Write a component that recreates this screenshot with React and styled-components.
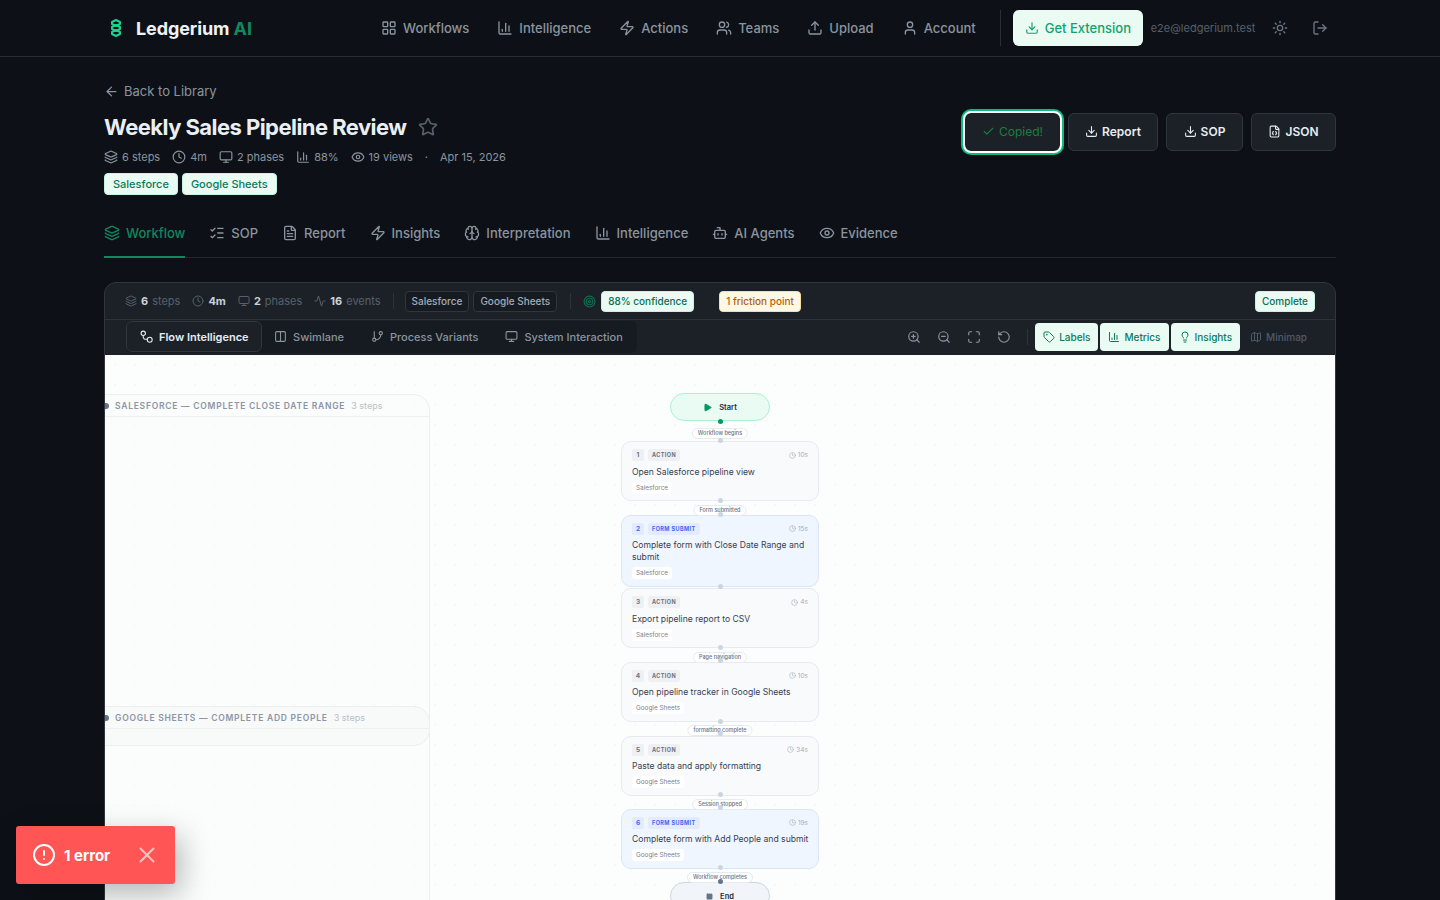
import { createGlobalStyle, styled } from 'styled-components';
import {
  Activity, ArrowLeft, Bot, Brain, ChartColumn, Check, CircleAlert, Clock, Columns2, Download, Eye,
  FileJson, FileText, GitBranch, Layers, LayoutGrid, Lightbulb, ListChecks, LogOut, Map as MapIcon,
  Maximize, Monitor, Play, RotateCcw, Square, Star, Sun, Tag, Target, Upload, User, Users, X, Zap,
  ZoomIn, ZoomOut,
} from 'lucide-react';

const GlobalStyle = createGlobalStyle`
  html, body { margin: 0; height: 100%; overflow: hidden; background: #0d1117; }
  body { font-family: Inter, "Liberation Sans", sans-serif; color: #e6edf3; }
  * { box-sizing: border-box; }
`;

const Page = styled.div`
  height: 900px;
  overflow: hidden;
  position: relative;
`;

const Nav = styled.header`
  height: 57px;
  border-bottom: 1px solid #2a2d32;
  padding: 0 104px;
  display: flex;
  align-items: center;
`;

const Brand = styled.div`
  display: flex;
  align-items: center;
  gap: 13px;
  font-size: 18px;
  font-weight: 700;
  letter-spacing: -0.1px;
  color: #f0f3f6;
  width: 277px;
  padding-left: 5px;
  span { color: #0f8a5f; }
`;

const NavLink = styled.a`
  display: flex;
  align-items: center;
  gap: 6px;
  font-size: 13px;
  font-weight: 500;
  color: #8b949e;
  margin-right: 28px;
  white-space: nowrap;
`;

const NavDivider = styled.div`
  width: 1px;
  height: 36px;
  background: #2a2d32;
  margin-left: -4px;
  margin-right: 12px;
`;

const ExtensionButton = styled.a`
  display: flex;
  align-items: center;
  gap: 6px;
  height: 36px;
  width: 130px;
  padding-left: 12px;
  border-radius: 6px;
  background: #e9fbf3;
  color: #10a26f;
  font-size: 13px;
  font-weight: 500;
`;

const Email = styled.span`
  font-size: 11px;
  color: #57606a;
  margin-left: 8px;
  width: 121px;
`;

const NavIcon = styled.span`
  display: flex;
  color: #6e7681;
  margin-right: 24px;
  &:last-child { margin-right: 0; }
`;

const Main = styled.main`
  padding: 0 104px;
`;

const BackLink = styled.a`
  display: flex;
  align-items: center;
  gap: 5px;
  margin-top: 24px;
  height: 20px;
  font-size: 13px;
  color: #8b949e;
`;

const Header = styled.div`
  display: flex;
  justify-content: space-between;
`;

const TitleRow = styled.div`
  display: flex;
  align-items: center;
  gap: 12px;
  margin-top: 10px;
  height: 32px;
  color: #57606a;
`;

const Title = styled.h1`
  margin: 0;
  font-size: 22px;
  font-weight: 700;
  letter-spacing: -0.55px;
  color: #eaeff5;
`;

const MetaRow = styled.div`
  display: flex;
  align-items: center;
  gap: 12px;
  margin-top: 5px;
  height: 18px;
  font-size: 11px;
  color: #8b949e;
`;

const MetaItem = styled.span`
  display: flex;
  align-items: center;
  gap: 4px;
`;

const TagRow = styled.div`
  display: flex;
  gap: 4px;
  margin-top: 7px;
`;

const AppTag = styled.span`
  display: flex;
  align-items: center;
  height: 22px;
  padding: 0 8px;
  border-radius: 4px;
  border: 1px solid #c9f2e0;
  background: #e9fbf3;
  color: #0b7a5b;
  font-size: 11px;
  font-weight: 500;
`;

const Actions = styled.div`
  display: flex;
  align-items: center;
  gap: 8px;
  margin-top: 12px;
  height: 38px;
`;

const ActionButton = styled.button`
  display: flex;
  align-items: center;
  justify-content: center;
  gap: 4px;
  height: 38px;
  width: ${(p) => p.$w}px;
  padding: 0 0 1px;
  border: 1px solid #30363d;
  border-radius: 6px;
  background: #1c2128;
  color: #e6edf3;
  font: 600 12px Inter, sans-serif;
`;

const CopiedButton = styled(ActionButton)`
  color: #17803d;
  font-weight: 400;
  border: 0;
  outline: 2px solid #fff;
  box-shadow: 0 0 0 4px #10b981;
`;

const Tabs = styled.nav`
  display: flex;
  gap: 24px;
  margin-top: 14px;
  height: 49px;
  border-bottom: 1px solid #21262d;
`;

const Tab = styled.a`
  display: flex;
  align-items: center;
  gap: 6px;
  height: 49px;
  font-size: 13px;
  font-weight: 500;
  color: ${(p) => (p.$active ? '#10875f' : '#8b949e')};
  border-bottom: 2px solid ${(p) => (p.$active ? '#10875f' : 'transparent')};
`;

const Viewer = styled.section`
  margin-top: 24px;
  border: 1px solid #30363d;
  border-radius: 12px 12px 0 0;
  background: #1c2128;
  overflow: hidden;
  height: 700px;
`;

const StatsBar = styled.div`
  display: flex;
  align-items: center;
  height: 37px;
  padding: 0 20px;
  border-bottom: 1px solid #2d333b;
  font-size: 11px;
  color: #57606a;
`;

const Stat = styled.span`
  display: flex;
  align-items: center;
  gap: 4px;
  margin-right: 12px;
  b { color: #c9d1d9; font-weight: 700; }
`;

const BarDivider = styled.span`
  width: 1px;
  height: 16px;
  background: #2d333b;
  margin: 0 ${(p) => p.$mr || 12}px 0 ${(p) => p.$ml || 0}px;
`;

const DarkChip = styled.span`
  display: flex;
  align-items: center;
  height: 21px;
  padding: 0 6px;
  margin-right: 4px;
  border-radius: 4px;
  border: 1px solid #30363d;
  background: #161b22;
  color: #a3adb8;
  font-size: 10px;
  font-weight: 500;
`;

const StatusChip = styled.span`
  display: flex;
  align-items: center;
  height: 21px;
  padding: 0 6px;
  border-radius: 4px;
  border: 1px solid ${(p) => (p.$warn ? '#f8dfa0' : '#c9f2e0')};
  background: ${(p) => (p.$warn ? '#fff8e6' : '#e9fbf3')};
  color: ${(p) => (p.$warn ? '#b45f06' : '#0b6e55')};
  font-size: 10px;
  font-weight: 500;
  margin-left: ${(p) => (p.$end ? 'auto' : `${p.$ml || 0}px`)};
`;

const ToolBar = styled.div`
  display: flex;
  align-items: center;
  height: 35px;
  padding: 0 18px 2px 21px;
`;

const ViewTabs = styled.div`
  display: flex;
  align-items: center;
  height: 32px;
  padding-right: 1px;
  border-radius: 6px;
  background: #161b22;
`;

const ViewTab = styled.a`
  display: flex;
  align-items: center;
  gap: 6px;
  height: 31px;
  padding: ${(p) => (p.$active ? '0 12px 0 13px' : '0 12.5px')};
  margin-right: ${(p) => (p.$active ? -1 : 0)}px;
  border-radius: 6px;
  font-size: 11px;
  font-weight: ${(p) => (p.$active ? 600 : 500)};
  color: ${(p) => (p.$active ? '#e6edf3' : '#8b949e')};
  background: ${(p) => (p.$active ? '#1c2128' : 'transparent')};
  border: 1px solid ${(p) => (p.$active ? '#30363d' : 'transparent')};
`;

const ToolIcons = styled.div`
  margin-left: auto;
  display: flex;
  gap: 16px;
  align-items: center;
  color: #8b949e;
  padding-right: 16px;
  border-right: 1px solid #2d333b;
  height: 16px;
  margin-right: 7px;
`;

const Toggle = styled.a`
  display: flex;
  align-items: center;
  gap: 4px;
  height: 28px;
  padding: 0 8px;
  margin-right: 2px;
  border-radius: 4px;
  font-size: 10px;
  font-weight: 500;
  background: ${(p) => (p.$on ? '#e9fbf3' : 'transparent')};
  color: ${(p) => (p.$on ? '#0b7a5b' : '#4f5a69')};
`;

const Canvas = styled.div`
  position: relative;
  height: 600px;
  background-color: #fcfdfd;
  background-image: radial-gradient(circle, #f6f8f8 1px, transparent 1px);
  background-size: 20px 20px;
`;

const Phase = styled.div`
  position: absolute;
  left: -20px;
  top: ${(p) => p.$top}px;
  width: 345px;
  height: ${(p) => p.$h}px;
  border: 1px solid #eceff1;
  border-radius: 16px;
  background: ${(p) => p.$bg || 'rgba(250, 251, 251, 0.6)'};
`;

const PhaseHead = styled.div`
  display: flex;
  align-items: center;
  gap: 6px;
  height: 22px;
  padding-left: 29px;
  border-bottom: 1px solid #eef0f2;
  font-size: 8.5px;
  font-weight: 600;
  letter-spacing: 0.76px;
  color: #8b95a5;
  white-space: nowrap;
  span { font-size: 9px; font-weight: 400; letter-spacing: 0; color: #b8bfc9; }
  &::before {
    content: '';
    position: absolute;
    left: 17px;
    width: 6px;
    height: 6px;
    border-radius: 50%;
    background: #64748b;
  }
`;

const Terminal = styled.div`
  position: absolute;
  left: ${(p) => p.$x}px;
  top: ${(p) => p.$y}px;
  width: 100px;
  height: 28px;
  border-radius: 14px;
  border: 1px solid ${(p) => (p.$end ? '#cbd5e1' : '#a7f3d0')};
  background: ${(p) => (p.$end ? '#f1f5f9' : '#e9fbf3')};
  display: flex;
  align-items: center;
  justify-content: center;
  gap: 7px;
  font-size: 7.5px;
  font-weight: 600;
  color: #1f2937;
  svg { color: ${(p) => (p.$end ? '#64748b' : '#059669')}; }
`;

const Node = styled.div`
  position: absolute;
  left: 516px;
  top: ${(p) => p.$y}px;
  width: 198px;
  height: ${(p) => p.$h}px;
  padding: 7px 10px;
  border-radius: 10px;
  border: 1px solid ${(p) => (p.$form ? '#dbe6fb' : '#e7eaf0')};
  background: ${(p) => (p.$form ? '#f0f6ff' : '#f9fafc')};
  z-index: 1;
`;

const NodeTop = styled.div`
  display: flex;
  align-items: center;
  height: 12px;
`;

const StepNum = styled.span`
  width: 12px;
  height: 12px;
  border-radius: 2px;
  display: flex;
  align-items: center;
  justify-content: center;
  font-size: 6.5px;
  font-weight: 700;
  background: ${(p) => (p.$form ? '#e2ebff' : '#eef0f4')};
  color: ${(p) => (p.$form ? '#3b68f0' : '#6b7280')};
`;

const Kind = styled.span`
  margin-left: 4px;
  height: 12px;
  padding: 0 4px;
  border-radius: 3px;
  display: flex;
  align-items: center;
  font-size: 5.5px;
  font-weight: 700;
  letter-spacing: 0.4px;
  background: ${(p) => (p.$form ? '#e2ebff' : '#eef0f4')};
  color: ${(p) => (p.$form ? '#3b68f0' : '#6b7280')};
`;

const Duration = styled.span`
  margin-left: auto;
  display: flex;
  align-items: center;
  gap: 2px;
  font-size: 6.5px;
  color: #a6adb8;
`;

const NodeText = styled.div`
  margin-top: 4.5px;
  margin-right: -2px;
  font-size: 8.6px;
  line-height: 12px;
  color: #374151;
`;

const AppChip = styled.span`
  display: flex;
  align-items: center;
  width: fit-content;
  height: 12px;
  margin-top: 4px;
  padding: 0 4px;
  border-radius: 3px;
  background: #fff;
  font-size: 6.4px;
  color: #7a828f;
`;

const EdgeLabel = styled.span`
  position: absolute;
  left: 615px;
  top: ${(p) => p.$y}px;
  transform: translateX(-50%);
  height: 11px;
  padding: 0 5px;
  border-radius: 6px;
  border: 1px solid #e7eaf0;
  background: #fff;
  display: flex;
  align-items: center;
  font-size: 5.5px;
  font-weight: 500;
  color: #6b7280;
  white-space: nowrap;
  z-index: 2;
`;

const Handle = styled.i`
  position: absolute;
  left: 612.5px;
  top: ${(p) => p.$y}px;
  width: 5px;
  height: 5px;
  border-radius: 50%;
  background: ${(p) => p.$c || '#cbd5e1'};
  z-index: 3;
`;

const Toast = styled.div`
  position: absolute;
  left: 16px;
  top: 826px;
  width: 159px;
  height: 58px;
  border-radius: 3px;
  background: #ff5555;
  color: #fff;
  display: flex;
  align-items: center;
  padding-left: 16px;
  font-size: 15px;
  font-weight: 700;
  box-shadow: 6px 10px 30px rgba(0, 0, 0, 0.28);
  z-index: 10;
  span { margin-left: 8px; }
  svg:last-child { margin-left: 24px; color: #ffc2c2; }
`;

const Logo = () => (
  <svg width="14" height="18" viewBox="0 0 14 18" fill="none" stroke="#1fd08f" strokeWidth="2" strokeLinejoin="round">
    <path d="M7 1l4 2v2l-4 2-4-2V3z" />
    <path d="M7 6l4 2v2l-4 2-4-2V8z" />
    <path d="M7 11l4 2v2l-4 2-4-2v-2z" />
  </svg>
);

const FlowIcon = () => (
  <svg width="13" height="13" viewBox="0 0 24 24" fill="none" stroke="currentColor" strokeWidth="2">
    <circle cx="6" cy="6" r="4" />
    <circle cx="18" cy="18" r="4.5" />
    <path d="M6 10v2a4 4 0 0 0 4 5h3.5" />
  </svg>
);

const navItems = [
  [LayoutGrid, 'Workflows'],
  [ChartColumn, 'Intelligence'],
  [Zap, 'Actions'],
  [Users, 'Teams'],
  [Upload, 'Upload'],
  [User, 'Account'],
];

const tabs = [
  [Layers, 'Workflow'],
  [ListChecks, 'SOP'],
  [FileText, 'Report'],
  [Zap, 'Insights'],
  [Brain, 'Interpretation'],
  [ChartColumn, 'Intelligence'],
  [Bot, 'AI Agents'],
  [Eye, 'Evidence'],
];

// the flow canvas is zoomed in the app, so its rows land on half pixels
const steps = [
  { n: 1, y: 86, h: 60, kind: 'ACTION', t: '10s', text: 'Open Salesforce pipeline view', app: 'Salesforce' },
  { n: 2, y: 159.5, h: 72.5, kind: 'FORM SUBMIT', t: '15s', text: 'Complete form with Close Date Range and submit', app: 'Salesforce' },
  { n: 3, y: 233, h: 60, kind: 'ACTION', t: '4s', text: 'Export pipeline report to CSV', app: 'Salesforce' },
  { n: 4, y: 306.5, h: 60, kind: 'ACTION', t: '10s', text: 'Open pipeline tracker in Google Sheets', app: 'Google Sheets' },
  { n: 5, y: 380.5, h: 60, kind: 'ACTION', t: '34s', text: 'Paste data and apply formatting', app: 'Google Sheets' },
  { n: 6, y: 453.5, h: 60, kind: 'FORM SUBMIT', t: '19s', text: 'Complete form with Add People and submit', app: 'Google Sheets' },
];

const edges = [
  [72.5, 'Workflow begins'],
  [149.5, 'Form submitted'],
  [296.5, 'Page navigation'],
  [369.5, 'formatting complete'],
  [443.5, 'Session stopped'],
  [516.5, 'Workflow completes'],
];

const handles = [83, 143, 157, 229, 290, 303, 364, 376, 437, 450, 510];

const App = () => (
  <Page>
    <GlobalStyle />
    <Nav>
      <Brand>
        <Logo />
        <div>Ledgerium <span>AI</span></div>
      </Brand>
      {navItems.map(([Icon, label]) => (
        <NavLink key={label}><Icon size={16} />{label}</NavLink>
      ))}
      <NavDivider />
      <ExtensionButton><Download size={14} />Get Extension</ExtensionButton>
      <Email>e2e@ledgerium.test</Email>
      <NavIcon><Sun size={16} /></NavIcon>
      <NavIcon><LogOut size={16} /></NavIcon>
    </Nav>
    <Main>
      <BackLink><ArrowLeft size={15} />Back to Library</BackLink>
      <Header>
        <div>
          <TitleRow>
            <Title>Weekly Sales Pipeline Review</Title>
            <Star size={20} />
          </TitleRow>
          <MetaRow>
            <MetaItem><Layers size={14} />6 steps</MetaItem>
            <MetaItem><Clock size={14} />4m</MetaItem>
            <MetaItem><Monitor size={14} />2 phases</MetaItem>
            <MetaItem><ChartColumn size={14} />88%</MetaItem>
            <MetaItem><Eye size={14} />19 views</MetaItem>
            <MetaItem>·</MetaItem>
            <MetaItem>Apr 15, 2026</MetaItem>
          </MetaRow>
          <TagRow>
            <AppTag>Salesforce</AppTag>
            <AppTag>Google Sheets</AppTag>
          </TagRow>
        </div>
        <Actions>
          <CopiedButton $w={95}><Check size={13} />Copied!</CopiedButton>
          <ActionButton $w={90}><Download size={13} />Report</ActionButton>
          <ActionButton $w={77}><Download size={13} />SOP</ActionButton>
          <ActionButton $w={85}><FileJson size={13} />JSON</ActionButton>
        </Actions>
      </Header>
      <Tabs>
        {tabs.map(([Icon, label], i) => (
          <Tab key={label} $active={i === 0}><Icon size={16} />{label}</Tab>
        ))}
      </Tabs>
      <Viewer>
        <StatsBar>
          <Stat><Layers size={12} /><b>6</b> steps</Stat>
          <Stat><Clock size={12} /><b>4m</b></Stat>
          <Stat><Monitor size={12} /><b>2</b> phases</Stat>
          <Stat><Activity size={12} /><b>16</b> events</Stat>
          <BarDivider $mr={11} />
          <DarkChip>Salesforce</DarkChip>
          <DarkChip>Google Sheets</DarkChip>
          <BarDivider $ml={9} />
          <Target size={13} color="#0f6e50" />
          <StatusChip $ml={5}>88% confidence</StatusChip>
          <StatusChip $warn $ml={25}>1 friction point</StatusChip>
          <StatusChip $end>Complete</StatusChip>
        </StatsBar>
        <ToolBar>
          <ViewTabs>
            <ViewTab $active><FlowIcon />Flow Intelligence</ViewTab>
            <ViewTab><Columns2 size={13} />Swimlane</ViewTab>
            <ViewTab><GitBranch size={13} />Process Variants</ViewTab>
            <ViewTab><Monitor size={13} />System Interaction</ViewTab>
          </ViewTabs>
          <ToolIcons>
            <ZoomIn size={14} />
            <ZoomOut size={14} />
            <Maximize size={14} />
            <RotateCcw size={14} />
          </ToolIcons>
          <Toggle $on><Tag size={12} />Labels</Toggle>
          <Toggle $on><ChartColumn size={12} />Metrics</Toggle>
          <Toggle $on><Lightbulb size={12} />Insights</Toggle>
          <Toggle><MapIcon size={12} />Minimap</Toggle>
        </ToolBar>
        <Canvas>
          <Phase $top={39} $h={600}>
            <PhaseHead>SALESFORCE — COMPLETE CLOSE DATE RANGE <span>3 steps</span></PhaseHead>
          </Phase>
          <Phase $top={351} $h={40} $bg="#f8f9f9">
            <PhaseHead>GOOGLE SHEETS — COMPLETE ADD PEOPLE <span>3 steps</span></PhaseHead>
          </Phase>
          <Terminal $x={565} $y={38}><Play size={9} fill="currentColor" />Start</Terminal>
          {steps.map((s) => {
            const form = s.kind !== 'ACTION';
            return (
              <Node key={s.n} $y={s.y} $h={s.h} $form={form}>
                <NodeTop>
                  <StepNum $form={form}>{s.n}</StepNum>
                  <Kind $form={form}>{s.kind}</Kind>
                  <Duration><Clock size={7} />{s.t}</Duration>
                </NodeTop>
                <NodeText>{s.text}</NodeText>
                <AppChip>{s.app}</AppChip>
              </Node>
            );
          })}
          {edges.map(([y, label]) => (
            <EdgeLabel key={label} $y={y}>{label}</EdgeLabel>
          ))}
          {handles.map((y) => <Handle key={y} $y={y} />)}
          <Handle $y={64} $c="#059669" />
          <Terminal $x={565} $y={527} $end><Square size={7} fill="currentColor" />End</Terminal>
          <Handle $y={524} $c="#64748b" />
        </Canvas>
      </Viewer>
    </Main>
    <Toast>
      <CircleAlert size={24} />
      <span>1 error</span>
      <X size={26} strokeWidth={1.8} />
    </Toast>
  </Page>
);

export default App;
